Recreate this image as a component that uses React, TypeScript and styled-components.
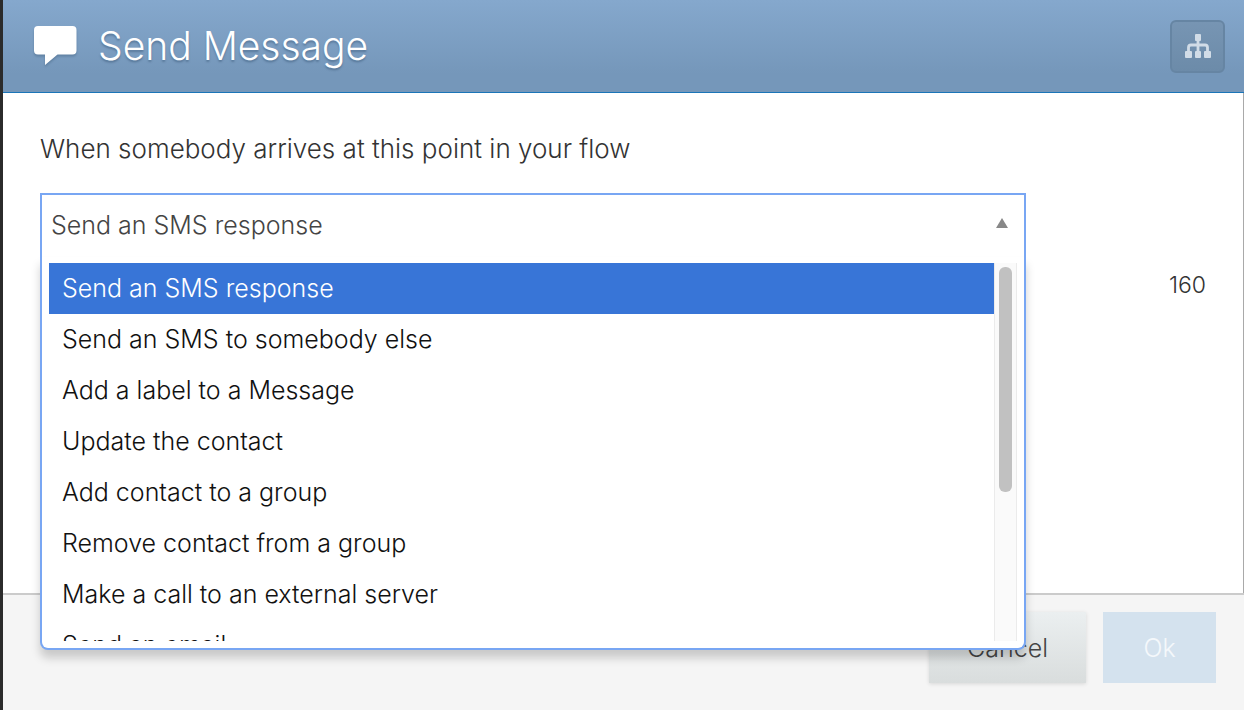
import React, { useState } from "react";
import styled, { createGlobalStyle } from "styled-components";

const GlobalStyle = createGlobalStyle`
  *, *::before, *::after { box-sizing: border-box; }
  body {
    margin: 0;
    background: #f5f5f5;
    font-family: Inter, "Liberation Sans", sans-serif;
    font-weight: 300;
    color: #333;
  }
  button, select { font: inherit; }
`;

const Dialog = styled.main`
  min-height: 100vh;
  display: flex;
  flex-direction: column;
  border-left: 3px solid #2b2b2b;
`;

const Header = styled.header`
  display: flex;
  align-items: center;
  height: 93px;
  padding: 0 19px 0 31px;
  border-bottom: 1px solid #1b75b8;
  background: linear-gradient(#85a8cd, #7597ba 80%);
`;

const BubbleIcon = styled.svg`
  width: 43px;
  height: 41px;
  margin-right: 21px;
  filter: drop-shadow(0 2px 1px rgba(60, 90, 120, 0.4));
`;

const Title = styled.h1`
  flex: 1;
  margin: 0;
  font-size: 39px;
  line-height: 48px;
  font-weight: 300;
  color: #fff;
  text-shadow: 0 2px 2px rgba(50, 80, 110, 0.45);
`;

const FlowButton = styled.button`
  display: grid;
  place-items: center;
  width: 55px;
  height: 53px;
  padding: 0;
  border: 2px solid #6685a3;
  border-radius: 6px;
  background: linear-gradient(#7795b3, #6c8ba9);
  color: #d1dce7;
`;

const Body = styled.section`
  flex: 1;
  padding: 39px 37px 0;
  background: #fff;
  border-right: 1px solid #a9a9a9;
`;

const Prompt = styled.label`
  display: block;
  margin-bottom: 27px;
  font-size: 26px;
  line-height: 34px;
`;

const Field = styled.div`
  position: relative;
  height: 64px;
  margin-right: 180px;
  border: 2px solid #78a6f3;
  border-bottom: 0;
`;

const ActionSelect = styled.select`
  display: block;
  width: 100%;
  height: 59px;
  padding: 0 40px 0 9px;
  border: 0;
  outline: 0;
  appearance: none;
  background: transparent;
  font-size: 25px;
  color: #444;
`;

const Arrow = styled.svg`
  position: absolute;
  top: 23px;
  right: 16px;
  width: 12px;
  height: 10px;
  pointer-events: none;
`;

const Menu = styled.div`
  position: absolute;
  z-index: 1;
  top: 100%;
  left: -2px;
  right: -2px;
  display: flex;
  height: 393px;
  padding: 6px 7px 7px;
  border: 2px solid #78a6f3;
  border-top: 0;
  border-radius: 0 0 8px 8px;
  background: #fff;
  box-shadow: 0 8px 10px rgba(0, 0, 0, 0.18);
`;

const Options = styled.ul`
  flex: 1;
  margin: 0;
  padding: 0;
  overflow: hidden;
  list-style: none;
`;

const Option = styled.li<{ $active: boolean }>`
  height: 51px;
  padding: 0 13px;
  font-size: 25px;
  line-height: 51px;
  cursor: pointer;
  color: ${(p) => (p.$active ? "#fff" : "#111")};
  background: ${(p) => (p.$active ? "#3875d7" : "transparent")};
`;

const Track = styled.div`
  width: 23px;
  padding: 4px;
  border: solid #ebebeb;
  border-width: 0 1px;
  background: #fafafa;
`;

const Thumb = styled.div`
  width: 13px;
  height: 225px;
  margin: 0 auto;
  border-radius: 6px;
  background: #c1c1c1;
`;

const Counter = styled.output`
  display: block;
  margin-top: 14px;
  font-size: 23px;
  line-height: 28px;
  text-align: right;
`;

const Footer = styled.footer`
  display: flex;
  justify-content: flex-end;
  gap: 17px;
  height: 117px;
  padding: 17px 28px 27px;
  border-top: 2px solid #cbcbcb;
  background: #f5f5f5;
`;

const FooterButton = styled.button<{ $primary?: boolean }>`
  width: ${(p) => (p.$primary ? 113 : 157)}px;
  height: 71px;
  padding: 0;
  border: 0;
  font-size: 25px;
  color: ${(p) => (p.$primary ? "#f4f8fb" : "#444")};
  background: ${(p) => (p.$primary ? "#d4e2ee" : "linear-gradient(#ebeff0, #d9dddd)")};
  box-shadow: ${(p) => (p.$primary ? "none" : "0 1px 4px rgba(0, 0, 0, 0.12)")};
`;

const ACTIONS = [
  "Send an SMS response",
  "Send an SMS to somebody else",
  "Add a label to a Message",
  "Update the contact",
  "Add contact to a group",
  "Remove contact from a group",
  "Make a call to an external server",
  "Send an email",
];

export default function App() {
  const [action, setAction] = useState(ACTIONS[0]);

  return (
    <Dialog>
      <GlobalStyle />
      <Header>
        <BubbleIcon viewBox="0 1 43 41" aria-hidden="true">
          <path
            fill="#fff"
            d="M4 1h34.500a4 4 0 0 1 4 4v20.500a4 4 0 0 1-4 4H23.500L11 40V29.500H4a4 4 0 0 1-4-4V5a4 4 0 0 1 4-4z"
          />
        </BubbleIcon>
        <Title>Send Message</Title>
        <FlowButton type="button" aria-label="Show flow">
          <svg width="26" height="24" viewBox="0 0 26 24" fill="currentColor" aria-hidden="true">
            <rect x="10" y="0" width="6" height="7" rx="1" />
            <rect x="0" y="17" width="7" height="7" rx="1" />
            <rect x="10" y="17" width="6" height="7" rx="1" />
            <rect x="19" y="17" width="7" height="7" rx="1" />
            <path
              d="M13 6v12M3.500 18v-4.500a2.500 2.500 0 0 1 2.500-2.500h14a2.500 2.500 0 0 1 2.500 2.500V18"
              fill="none"
              stroke="currentColor"
              strokeWidth="2.800"
            />
          </svg>
        </FlowButton>
      </Header>
      <Body>
        <Prompt htmlFor="action">When somebody arrives at this point in your flow</Prompt>
        <Field>
          <ActionSelect id="action" value={action} onChange={(e) => setAction(e.target.value)}>
            {ACTIONS.map((name) => (
              <option key={name}>{name}</option>
            ))}
          </ActionSelect>
          <Arrow viewBox="0 0 12 10" aria-hidden="true">
            <path d="M6 0l6 10H0z" fill="#888" />
          </Arrow>
          <Menu>
            <Options role="listbox" aria-label="Actions">
              {ACTIONS.map((name) => (
                <Option
                  key={name}
                  role="option"
                  aria-selected={name === action}
                  $active={name === action}
                  onClick={() => setAction(name)}
                >
                  {name}
                </Option>
              ))}
            </Options>
            <Track>
              <Thumb />
            </Track>
          </Menu>
        </Field>
        <Counter>160</Counter>
      </Body>
      <Footer>
        <FooterButton type="button">Cancel</FooterButton>
        <FooterButton type="button" $primary>
          Ok
        </FooterButton>
      </Footer>
    </Dialog>
  );
}
